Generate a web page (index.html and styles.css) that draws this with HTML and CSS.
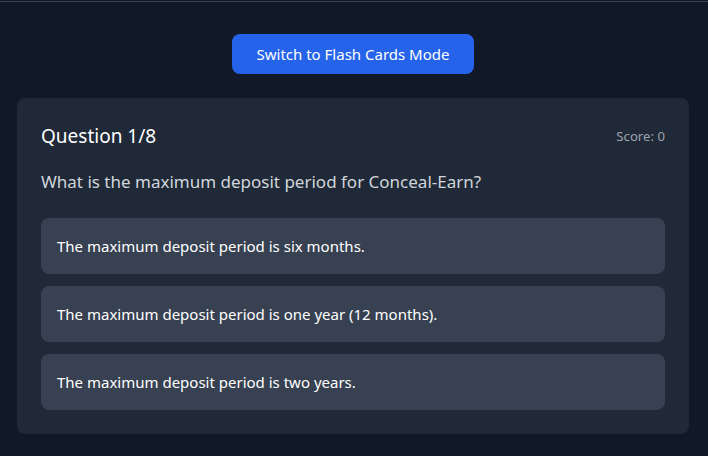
FILE: index.html
```html
<!DOCTYPE html>
<html>
<head>
<meta charset="utf-8">
<link rel="stylesheet" href="styles.css">
</head>
<body>
<div class="topline"></div>
<main class="page">
  <div class="toolbar">
    <button class="switch-btn">Switch to Flash Cards Mode</button>
  </div>
  <section class="card">
    <div class="card-head">
      <h2 class="q-title">Question 1/8</h2>
      <span class="score">Score: 0</span>
    </div>
    <p class="q-text">What is the maximum deposit period for Conceal-Earn?</p>
    <div class="options">
      <div class="option">The maximum deposit period is six months.</div>
      <div class="option">The maximum deposit period is one year (12 months).</div>
      <div class="option">The maximum deposit period is two years.</div>
    </div>
  </section>
</main>
</body>
</html>
```

FILE: styles.css
```css
* { box-sizing: border-box; }
html, body {
  margin: 0;
  padding: 0;
  background: #111827;
  font-family: "Noto Sans", "Open Sans", sans-serif;
  color: #f3f4f6;
}
.topline {
  height: 2px;
  border-top: 1px solid #111827;
  background: #374151;
}
.page {
  padding: 32px 19px 24px 17px;
}
.toolbar {
  display: flex;
  justify-content: center;
  margin-bottom: 24px;
}
.switch-btn {
  background: #2563eb;
  color: #ffffff;
  border: none;
  border-radius: 8px;
  height: 40px;
  width: 242px;
  padding: 0;
  white-space: nowrap;
  font-family: inherit;
  font-size: 15px;
  line-height: 24px;
}
.card {
  background: #1f2937;
  border-radius: 8px;
  padding: 24px;
}
.card-head {
  display: flex;
  justify-content: space-between;
  align-items: center;
  margin-bottom: 16px;
  height: 28px;
}
.q-title {
  margin: 0;
  font-size: 19px;
  font-weight: 400;
  line-height: 28px;
  color: #ffffff;
}
.score {
  font-size: 13.2px;
  color: #9ca3af;
}
.q-text {
  margin: 0 0 24px 0;
  padding-top: 2px;
  height: 28px;
  font-size: 17px;
  line-height: 28px;
  color: #d1d5db;
}
.options {
  display: flex;
  flex-direction: column;
  gap: 12px;
}
.option {
  background: #374151;
  border-radius: 8px;
  padding: 16px;
  font-size: 15px;
  line-height: 24px;
  color: #ffffff;
}
```
